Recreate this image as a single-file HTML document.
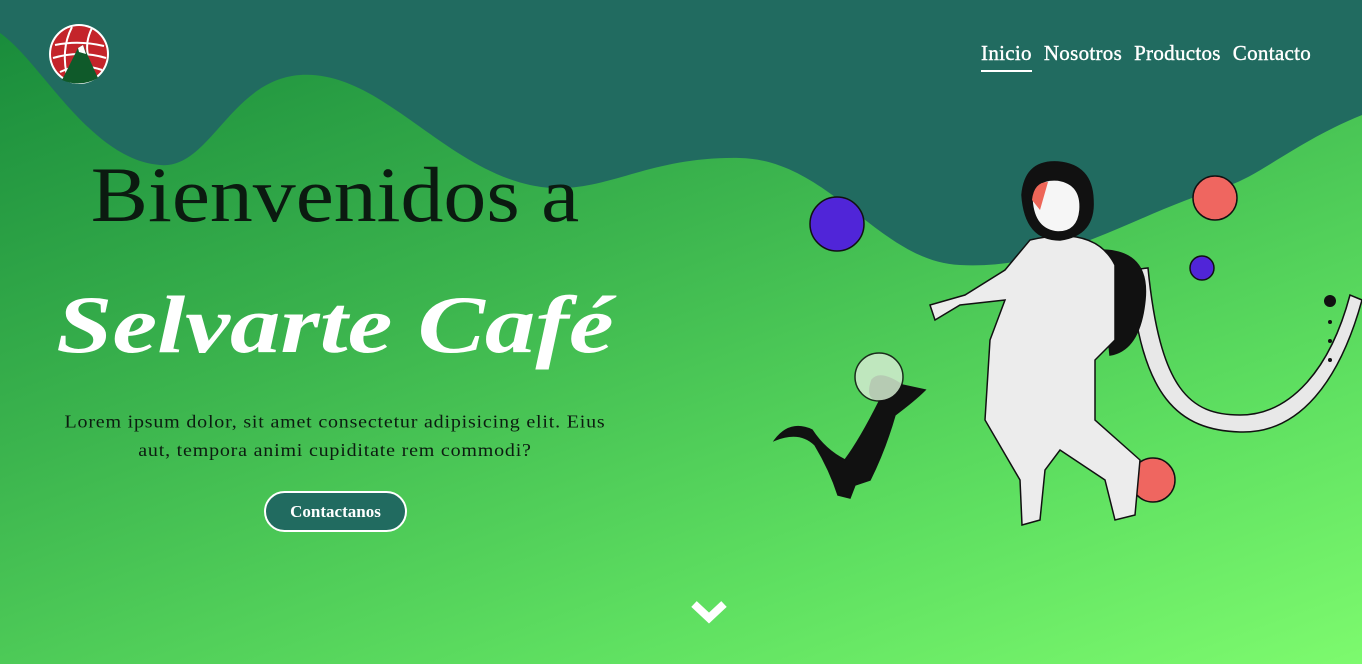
<!DOCTYPE html>
<html><head><meta charset="utf-8"><style>
html,body{margin:0;padding:0}
body{width:1362px;height:664px;overflow:hidden;position:relative;font-family:"Liberation Serif",Georgia,serif;background:linear-gradient(160deg,#17893a 0%,#3cb54e 40%,#5fe061 75%,#7dfa6e 100%)}
svg.bg{position:absolute;left:0;top:0}
.nav{position:absolute;top:41px;right:51px;display:flex;gap:12px;font-size:21px;color:#fff;letter-spacing:.3px;-webkit-text-stroke:.4px #fff}
.nav span{padding-bottom:4px}
.nav .on{border-bottom:2px solid #fff}
h1{position:absolute;left:0;width:670px;top:150px;margin:0;text-align:center;font-weight:normal;font-size:78px;color:#0b1a10;transform:scaleX(1.1);transform-origin:335px 0}
h2{position:absolute;left:0;width:670px;top:278px;margin:0;text-align:center;font-style:italic;font-weight:bold;font-size:82px;color:#fff;transform:scaleX(1.23);transform-origin:335px 0}
p{position:absolute;left:58px;width:554px;top:408px;margin:0;text-align:center;font-size:20px;line-height:31px;color:#0c1c10;letter-spacing:.8px;transform:scaleY(.92);transform-origin:0 0}
.btn{position:absolute;left:264px;top:491px;width:143px;height:41px;border:2px solid #fff;border-radius:21px;background:#216b60;color:#fff;font-size:17px;font-weight:bold;text-align:center;line-height:37px;box-sizing:border-box}
</style></head><body>
<svg class="bg" width="1362" height="664" viewBox="0 0 1362 664">
<path d="M0 0 H1362 V115 C1300 140 1260 175 1230 185 C1130 215 1060 270 960 265 C880 262 830 160 740 158 C640 156 600 200 530 185 C440 165 380 70 300 75 C230 80 210 170 160 165 C90 160 40 60 0 33 Z" fill="#216b60"/>
<circle cx="79" cy="54" r="30" fill="#fff"/>
<circle cx="79" cy="54" r="28" fill="#c4242a"/>
<path d="M55 45 Q79 40 104 46 M53 58 Q80 50 106 58 M60 72 Q80 62 102 70 M72 27 Q60 50 68 80 M92 28 Q85 42 88 55" stroke="#fff" stroke-width="2" fill="none"/>
<path d="M62 80 L78 48 L83 45 L98 78 Q80 88 62 80Z" fill="#0f5a2a"/>
<path d="M78 48 L83 45 L86 54 L79 52Z" fill="#fff"/>
<g stroke="#111" stroke-width="1.5">
<circle cx="837" cy="224" r="27" fill="#5025d8"/>
<circle cx="1215" cy="198" r="22" fill="#ef6660"/>
<circle cx="1202" cy="268" r="12" fill="#5025d8"/>
<circle cx="1153" cy="480" r="22" fill="#ef6660"/>
<path d="M1130 270 C1140 400 1180 430 1240 432 C1300 434 1340 380 1362 300 L1350 295 C1330 370 1290 415 1240 415 C1190 415 1160 390 1148 268Z" fill="#e8e8e8"/>
<path d="M1100 250 Q1150 250 1145 300 Q1140 350 1110 355 Z" fill="#111"/>
<path d="M1030 240 Q1095 225 1115 265 L1115 340 L1095 360 L1095 420 L1140 460 L1135 515 L1115 520 L1105 480 L1060 450 L1045 470 L1040 520 L1022 525 L1020 480 L985 420 L990 340 L1005 300 L960 305 L935 320 L930 305 L965 295 L1005 270Z" fill="#ececec"/>
<path d="M1022 195 Q1025 160 1058 162 Q1092 165 1093 200 Q1095 235 1060 240 Q1025 240 1022 195Z" fill="#111"/>
<path d="M1032 200 Q1034 178 1058 180 Q1082 184 1080 210 Q1078 232 1058 232 Q1034 230 1032 200Z" fill="#f6f6f6"/>
<path d="M1032 200 Q1034 182 1048 182 L1040 210Z" fill="#ee6658" stroke="none"/>
<path d="M902 385 Q880 370 872 380 Q865 400 880 400 Q860 440 845 460 Q825 450 812 430 Q790 420 775 440 Q800 430 815 445 Q830 470 838 495 L850 498 L855 485 L870 480 Q885 450 895 415 Q915 400 925 390 Z" fill="#111"/>
<circle cx="879" cy="377" r="24" fill="#d3ecd0" opacity=".85"/>
</g>
<circle cx="1330" cy="301" r="6" fill="#111"/>
<circle cx="1330" cy="322" r="2" fill="#111"/>
<circle cx="1330" cy="341" r="2" fill="#111"/>
<circle cx="1330" cy="360" r="2" fill="#111"/>
<path d="M694 604 L709 618 L724 604" stroke="#fff" stroke-width="8" fill="none"/>
</svg>
<div class="nav"><span class="on">Inicio</span><span>Nosotros</span><span>Productos</span><span>Contacto</span></div>
<h1>Bienvenidos a</h1>
<h2>Selvarte Café</h2>
<p>Lorem ipsum dolor, sit amet consectetur adipisicing elit. Eius aut, tempora animi cupiditate rem commodi?</p>
<div class="btn">Contactanos</div>
</body></html>
